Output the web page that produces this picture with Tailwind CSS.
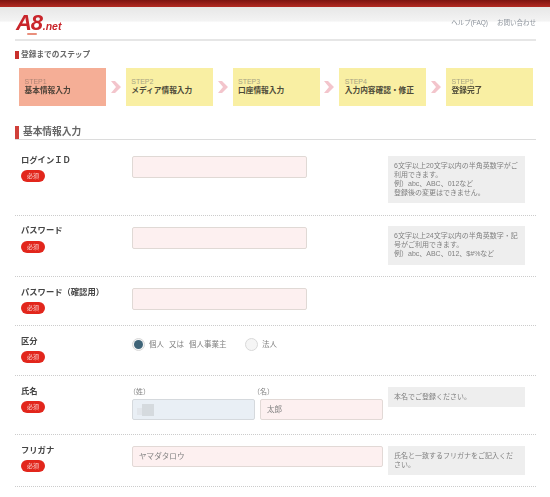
<!DOCTYPE html>
<html lang="ja">

<head>
    <meta charset="UTF-8" />
    <title>A8.net 基本情報入力</title>
    <script src="https://cdn.jsdelivr.net/npm/@tailwindcss/browser@4"></script>
</head>

<body class="bg-white text-[#444] overflow-hidden font-['Liberation_Sans','Noto_Sans_CJK_JP',sans-serif]">
  <div class="blur-[0.35px]">
    <!-- Top bar -->
    <div class="h-[7px] bg-gradient-to-b from-[#7d1410] to-[#b32a22]"></div>

    <!-- Header -->
    <div class="h-[34px] bg-gradient-to-b from-[#e7e7e7] via-[#f3f3f3] via-[40%] to-white to-[46%]">
        <div class="w-[521px] h-[34px] ml-[15px] flex justify-between border-b-2 border-[#e6e6e6]">
            <div class="flex flex-col items-start">
                <div class="flex items-baseline italic font-bold text-[#c9252b] leading-none pl-[1px] pt-[5px]">
                    <span class="text-[22px] tracking-[-1.2px]">A8</span>
                    <span class="text-[10.5px] ml-[1px]">.net</span>
                </div>
                <div class="w-[10px] h-[2px] ml-[12px] -mt-[1px] rounded-full bg-[#e98f7c]"></div>
            </div>
            <div class="flex gap-[9px] pt-[12px] text-[6.5px] leading-[8px] text-[#8b929a]">
                <a href="#">ヘルプ(FAQ)</a>
                <a href="#">お問い合わせ</a>
            </div>
        </div>
    </div>

    <div class="w-[521px] ml-[15px]">
        <!-- Steps -->
        <div class="mt-[10px] h-[8px] flex items-center gap-[2px]">
            <span class="w-[4px] h-[8px] bg-[#c9302c]"></span>
            <span class="text-[7.7px] font-bold text-[#666]">登録までのステップ</span>
        </div>
        <div class="mt-[9px] ml-[4px] w-[514px] h-[38px] flex justify-between items-center">
            <div class="w-[87px] h-[38px] pl-[5.5px] pt-[9px] bg-[#f5ae96]">
                <p class="text-[7px] leading-[9px] text-[#b08474]">STEP1</p>
                <p class="text-[7.7px] leading-[10px] font-bold text-[#4d4238]">基本情報入力</p>
            </div>
            <svg class="w-[10px] h-[12px]" viewBox="0 0 10 12"><path d="M0 0h4l6 6-6 6H0l5-6z" fill="#f3c5cc" /></svg>
            <div class="w-[87px] h-[38px] pl-[5.5px] pt-[9px] bg-[#f9efa3]">
                <p class="text-[7px] leading-[9px] text-[#a8a482]">STEP2</p>
                <p class="text-[7.7px] leading-[10px] font-bold text-[#4d4a38]">メディア情報入力</p>
            </div>
            <svg class="w-[10px] h-[12px]" viewBox="0 0 10 12"><path d="M0 0h4l6 6-6 6H0l5-6z" fill="#f3c5cc" /></svg>
            <div class="w-[87px] h-[38px] pl-[5.5px] pt-[9px] bg-[#f9efa3]">
                <p class="text-[7px] leading-[9px] text-[#a8a482]">STEP3</p>
                <p class="text-[7.7px] leading-[10px] font-bold text-[#4d4a38]">口座情報入力</p>
            </div>
            <svg class="w-[10px] h-[12px]" viewBox="0 0 10 12"><path d="M0 0h4l6 6-6 6H0l5-6z" fill="#f3c5cc" /></svg>
            <div class="w-[87px] h-[38px] pl-[5.5px] pt-[9px] bg-[#f9efa3]">
                <p class="text-[7px] leading-[9px] text-[#a8a482]">STEP4</p>
                <p class="text-[7.7px] leading-[10px] font-bold text-[#4d4a38]">入力内容確認・修正</p>
            </div>
            <svg class="w-[10px] h-[12px]" viewBox="0 0 10 12"><path d="M0 0h4l6 6-6 6H0l5-6z" fill="#f3c5cc" /></svg>
            <div class="w-[87px] h-[38px] pl-[5.5px] pt-[9px] bg-[#f9efa3]">
                <p class="text-[7px] leading-[9px] text-[#a8a482]">STEP5</p>
                <p class="text-[7.7px] leading-[10px] font-bold text-[#4d4a38]">登録完了</p>
            </div>
        </div>

        <!-- Section heading -->
        <div class="mt-[20px] h-[14px] flex items-center gap-[4px] border-b border-[#dcdcdc]">
            <span class="w-[4px] h-[13px] bg-[#d0403a]"></span>
            <h2 class="text-[9.7px] font-bold text-[#666]">基本情報入力</h2>
        </div>

        <!-- ログインID -->
        <div class="h-[76px] flex border-b border-dotted border-[#cccccc]">
            <div class="w-[117px] pl-[6px] pt-[15px]">
                <p class="text-[8.3px] leading-[10px] font-bold">ログインＩＤ</p>
                <span class="block w-[24px] h-[12px] mt-[5px] rounded-full bg-[#e2261c] text-[6px] leading-[12px] text-center text-white/80">必須</span>
            </div>
            <div class="w-[256px] pt-[16px]">
                <div class="w-[175px] h-[22px] bg-[#fdf0f0] border border-[#e0d9d5] rounded-[2px]"></div>
            </div>
            <div class="pt-[16px]">
                <div class="w-[137px] h-[47px] px-[6px] pt-[5px] bg-[#eeeeee] text-[7px] leading-[9px] text-[#808080]">6文字以上20文字以内の半角英数字がご利用できます。<br />例）abc、ABC、012など<br />登録後の変更はできません。</div>
            </div>
        </div>

        <!-- パスワード -->
        <div class="h-[61px] flex border-b border-dotted border-[#cccccc]">
            <div class="w-[117px] pl-[6px] pt-[9px]">
                <p class="text-[8.3px] leading-[10px] font-bold">パスワード</p>
                <span class="block w-[24px] h-[12px] mt-[6px] rounded-full bg-[#e2261c] text-[6px] leading-[12px] text-center text-white/80">必須</span>
            </div>
            <div class="w-[256px] pt-[11px]">
                <div class="w-[175px] h-[22px] bg-[#fdf0f0] border border-[#e0d9d5] rounded-[2px]"></div>
            </div>
            <div class="pt-[10px]">
                <div class="w-[137px] h-[39px] px-[6px] pt-[5px] bg-[#eeeeee] text-[7px] leading-[9px] text-[#808080]">6文字以上24文字以内の半角英数字・記号がご利用できます。<br />例）abc、ABC、012、$#%など</div>
            </div>
        </div>

        <!-- パスワード（確認用） -->
        <div class="h-[49px] flex border-b border-dotted border-[#cccccc]">
            <div class="w-[117px] pl-[6px] pt-[10px]">
                <p class="text-[8.3px] leading-[10px] font-bold whitespace-nowrap">パスワード（確認用）</p>
                <span class="block w-[24px] h-[12px] mt-[5px] rounded-full bg-[#e2261c] text-[6px] leading-[12px] text-center text-white/80">必須</span>
            </div>
            <div class="w-[256px] pt-[11px]">
                <div class="w-[175px] h-[22px] bg-[#fdf0f0] border border-[#e0d9d5] rounded-[2px]"></div>
            </div>
        </div>

        <!-- 区分 -->
        <div class="h-[50px] flex border-b border-dotted border-[#cccccc]">
            <div class="w-[117px] pl-[6px] pt-[10px]">
                <p class="text-[8.3px] leading-[10px] font-bold">区分</p>
                <span class="block w-[24px] h-[12px] mt-[5px] rounded-full bg-[#e2261c] text-[6px] leading-[12px] text-center text-white/80">必須</span>
            </div>
            <div class="pt-[12px] flex items-start text-[7.5px] leading-[13px] text-[#808080]">
                <span class="w-[13px] h-[13px] flex items-center justify-center rounded-full border border-[#d8d8d8] bg-[#f5f5f5]">
                    <span class="w-[9px] h-[9px] rounded-full bg-[#3f6478]"></span>
                </span>
                <span class="w-[100px] pl-[4px] flex gap-[5px]">
                    <span>個人</span>
                    <span>又は</span>
                    <span>個人事業主</span>
                </span>
                <span class="w-[13px] h-[13px] rounded-full border border-[#d8d8d8] bg-[#f5f5f5]"></span>
                <span class="pl-[4px]">法人</span>
            </div>
        </div>

        <!-- 氏名 -->
        <div class="h-[59px] flex border-b border-dotted border-[#cccccc]">
            <div class="w-[117px] pl-[6px] pt-[10px]">
                <p class="text-[8.3px] leading-[10px] font-bold">氏名</p>
                <span class="block w-[24px] h-[12px] mt-[5px] rounded-full bg-[#e2261c] text-[6px] leading-[12px] text-center text-white/80">必須</span>
            </div>
            <div class="w-[256px] pt-[11px] flex gap-[5px]">
                <div class="w-[123px]">
                    <p class="-ml-[3px] text-[7px] leading-[9px] text-[#808080] mb-[3px]">（姓）</p>
                    <div class="h-[21px] pl-[4px] flex items-center bg-[#e9eff5] border border-[#d5d9dd] rounded-[2px]">
                        <span class="w-[5px] h-[7px] mt-[3px] bg-[#e2e6eb]"></span>
                        <span class="w-[12px] h-[12px] bg-[#d5dade]"></span>
                    </div>
                </div>
                <div class="w-[123px]">
                    <p class="-ml-[7px] text-[7px] leading-[9px] text-[#808080] mb-[3px]">（名）</p>
                    <div class="h-[21px] pl-[6px] text-[7.5px] leading-[19px] text-[#808080] bg-[#fdf0f0] border border-[#e2d9d6] rounded-[2px]">太郎</div>
                </div>
            </div>
            <div class="pt-[11px]">
                <div class="w-[137px] h-[20px] px-[6px] pt-[5px] bg-[#eeeeee] text-[7px] leading-[9px] text-[#808080]">本名でご登録ください。</div>
            </div>
        </div>

        <!-- フリガナ -->
        <div class="h-[52px] flex border-b border-dotted border-[#cccccc]">
            <div class="w-[117px] pl-[6px] pt-[10px]">
                <p class="text-[8.3px] leading-[10px] font-bold">フリガナ</p>
                <span class="block w-[24px] h-[12px] mt-[5px] rounded-full bg-[#e2261c] text-[6px] leading-[12px] text-center text-white/80">必須</span>
            </div>
            <div class="w-[256px] pt-[11px]">
                <div class="w-[251px] h-[21px] pl-[6px] text-[7.6px] leading-[19px] text-[#808080] bg-[#fdf0f0] border border-[#e2d9d6] rounded-[2px]">ヤマダタロウ</div>
            </div>
            <div class="pt-[11px]">
                <div class="w-[137px] h-[29px] px-[6px] pt-[5px] bg-[#eeeeee] text-[7px] leading-[9px] text-[#808080]">氏名と一致するフリガナをご記入ください。</div>
            </div>
        </div>
    </div>
  </div>
</body>

</html>
